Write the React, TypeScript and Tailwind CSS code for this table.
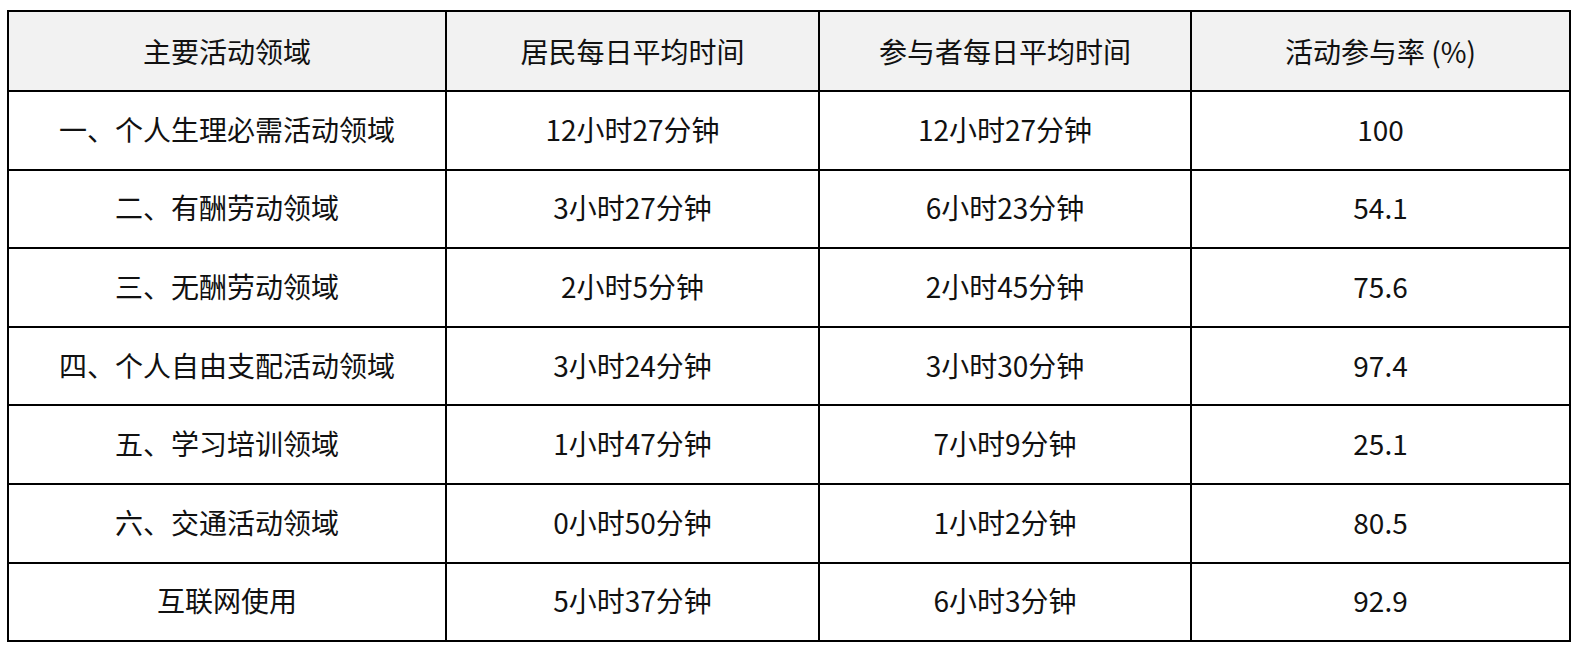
const header = ["主要活动领域", "居民每日平均时间", "参与者每日平均时间", "活动参与率 (%)"];

const rows: [string, string, string, string][] = [
  ["一、个人生理必需活动领域", "12小时27分钟", "12小时27分钟", "100"],
  ["二、有酬劳动领域", "3小时27分钟", "6小时23分钟", "54.1"],
  ["三、无酬劳动领域", "2小时5分钟", "2小时45分钟", "75.6"],
  ["四、个人自由支配活动领域", "3小时24分钟", "3小时30分钟", "97.4"],
  ["五、学习培训领域", "1小时47分钟", "7小时9分钟", "25.1"],
  ["六、交通活动领域", "0小时50分钟", "1小时2分钟", "80.5"],
  ["互联网使用", "5小时37分钟", "6小时3分钟", "92.9"],
];

export default function App() {
  return (
    <div
      className="min-h-screen bg-white pl-[7px] pt-[10px] text-[#111]"
      style={{ fontFamily: '"Noto Sans CJK SC", "Noto Sans", sans-serif' }}
    >
      <table className="w-[1562px] table-fixed border-collapse border-2 border-black text-[28px]">
        <colgroup>
          <col className="w-[438px]" />
          <col className="w-[373px]" />
          <col className="w-[372px]" />
          <col className="w-[379px]" />
        </colgroup>
        <thead>
          <tr className="h-[80px] bg-[#f2f2f2]">
            {header.map((h) => (
              <th key={h} className="border-2 border-black text-center font-normal">
                {h}
              </th>
            ))}
          </tr>
        </thead>
        <tbody>
          {rows.map((row) => (
            <tr key={row[0]} className="h-[78.6px]">
              {row.map((cell, i) => (
                <td key={i} className="border-2 border-black pb-[3px] text-center">
                  {cell}
                </td>
              ))}
            </tr>
          ))}
        </tbody>
      </table>
    </div>
  );
}
